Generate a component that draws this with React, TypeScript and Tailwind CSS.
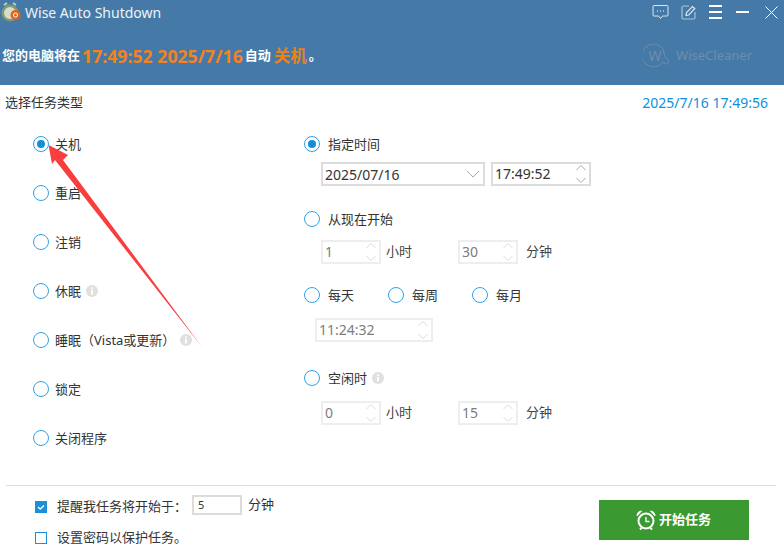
import React from "react";

const font = { fontFamily: '"Noto Sans", "Noto Sans CJK SC", sans-serif' };

function Radio({ checked = false, label, info = false, right = false, className = "" }: { checked?: boolean; label: string; info?: boolean; right?: boolean; className?: string }) {
  return (
    <div className={"flex items-center h-[24px] " + className}>
      <span className="w-[16px] h-[16px] rounded-full border-[1.5px] border-[#2ea3e8] flex items-center justify-center shrink-0">
        {checked && <span className="w-[8px] h-[8px] rounded-full bg-[#0f8fdc]" />}
      </span>
      <span className={"pt-[1px] text-[13px] text-[#333] whitespace-pre " + (right ? "ml-[8px]" : "ml-[6px]")}>{label}</span>
      {info && <Info />}
    </div>
  );
}

function Info() {
  return (
    <span className="ml-[5px] w-[12px] h-[12px] rounded-full bg-[#e0e0e0] flex items-center justify-center shrink-0">
      <svg width="12" height="12" viewBox="0 0 12 12">
        <rect x="5" y="2.5" width="2" height="1.5" fill="#fff" />
        <rect x="5" y="5" width="2" height="4.5" fill="#fff" />
      </svg>
    </span>
  );
}

function Chevrons({ color = "#b5b5b5" }: { color?: string }) {
  return (
    <svg width="12" height="22" viewBox="0 0 12 22" fill="none" stroke={color} strokeWidth="1" className="shrink-0">
      <polyline points="1.5,7 6,2.5 10.5,7" />
      <polyline points="1.5,15 6,19.5 10.5,15" />
    </svg>
  );
}

function Spin({ value, className, disabled = true }: { value: string; className: string; disabled?: boolean }) {
  return (
    <div className={"h-[24px] border-2 flex items-center justify-between pl-[2px] pr-[2px] text-[14px] leading-none " + (disabled ? "border-[#eeeeee] text-[#7d7d7d] " : "border-[#dcdcdc] text-[#333] ") + className}>
      <span>{value}</span>
      <Chevrons color={disabled ? "#dcdcdc" : "#a8a8a8"} />
    </div>
  );
}

function SpinPair({ a, b }: { a: string; b: string }) {
  return (
    <div className="flex items-center ml-[17px] h-[24px]">
      <Spin value={a} className="w-[60px]" />
      <span className="ml-[5px] w-[72px] text-[13px] text-[#444]">小时</span>
      <Spin value={b} className="w-[60px]" />
      <span className="ml-[8px] text-[13px] text-[#444]">分钟</span>
    </div>
  );
}

export default function App() {
  return (
    <div className="relative w-[784px] h-[552px] bg-white overflow-hidden flex flex-col" style={font}>
      <header className="h-[85px] bg-[#457aa8] flex flex-col shrink-0">
        <div className="h-[24px] flex items-center">
          <svg width="20" height="22" viewBox="0 0 20 22" className="ml-[1px] shrink-0">
            <circle cx="9" cy="12" r="8.5" fill="#7f9a6b" />
            <circle cx="9" cy="12" r="6" fill="#d7dcd2" />
            <path d="M3 4 L6 2 M15 4 L12 2" stroke="#c5d0bd" strokeWidth="2" />
            <circle cx="14.5" cy="14" r="5" fill="#e0641c" />
            <circle cx="14.5" cy="14" r="2" fill="none" stroke="#fff" strokeWidth="1" />
          </svg>
          <span className="ml-[4px] text-[14px] text-[#eef3f8]">Wise Auto Shutdown</span>
          <div className="ml-auto flex items-center h-full text-white">
            <svg width="17" height="16" viewBox="0 0 17 16" fill="none" stroke="#dbe6f0" strokeWidth="1" className="mr-[12px]">
              <path d="M2 1.5 H15 Q16 1.5 16 2.5 V11 Q16 12 15 12 H10.5 L8.5 14.5 L6.5 12 H2 Q1 12 1 11 V2.5 Q1 1.5 2 1.5 Z" />
              <path d="M5 7 H6 M8 7 H9 M11 7 H12" stroke="#fff" />
            </svg>
            <svg width="15" height="15" viewBox="0 0 15 15" fill="none" stroke="#a9c5dd" strokeWidth="1.2" className="mr-[13px]">
              <path d="M8 1 H2.5 Q1 1 1 2.5 V12.5 Q1 14 2.5 14 H12.5 Q14 14 14 12.5 V7" />
              <path d="M5 10.5 L5.5 7.5 L11.5 1.5 L13.8 3.5 L7.8 10 Z" stroke="#dbe6f0" />
            </svg>
            <svg width="13" height="14" viewBox="0 0 13 14" fill="#fff" className="mr-[14px]">
              <rect x="0" y="0" width="13" height="2" />
              <rect x="0" y="6" width="13" height="2" />
              <rect x="0" y="12" width="13" height="2" />
            </svg>
            <svg width="14" height="2" viewBox="0 0 14 2" fill="#fff" className="mr-[15px]">
              <rect width="13" height="2" />
            </svg>
            <svg width="13" height="13" viewBox="0 0 13 13" stroke="#fff" strokeWidth="1" className="mr-[6px]">
              <path d="M0.5 0.5 L12.5 12.5 M12.5 0.5 L0.5 12.5" />
            </svg>
          </div>
        </div>
        <div className="flex items-center h-[36px] mt-[14px] pl-[2px] text-white whitespace-pre">
          <span className="text-[13px] font-bold">您的电脑将在</span>
          <span className="ml-[2px] text-[17.7px] font-bold text-[#f58220]">17:49:52 2025/7/16</span>
          <span className="ml-[2px] text-[13px] font-bold">自动</span>
          <span className="ml-[3px] text-[16.5px] font-bold text-[#e8821e]">关机</span>
          <span className="ml-[2px] text-[13px] font-bold">。</span>
          <div className="ml-auto mr-[32px] flex items-center">
            <svg width="27" height="25" viewBox="0 0 27 25" fill="none" stroke="#6f8cab" strokeWidth="1">
              <path d="M20 18 A11.5 11.5 0 1 1 20 5 Q21 9 22 13 Q26.5 15 25.5 18.5 Q24 22 20 18" />
              <text x="5.5" y="17" fontSize="14" fill="#6f8cab" stroke="none" fontFamily="Noto Sans">W</text>
            </svg>
            <span className="ml-[6px] text-[13px] text-[#6f8cab]">WiseCleaner</span>
          </div>
        </div>
      </header>

      <div className="flex items-center justify-between h-[35px] pl-[5px] pr-[16px] shrink-0">
        <span className="text-[13px] text-[#333]">选择任务类型</span>
        <span className="text-[14px] text-[#0f8fdc]">2025/7/16 17:49:56</span>
      </div>

      <div className="flex h-[365px] shrink-0 pt-[12px]">
        <div className="ml-[33px] w-[270px] flex flex-col gap-[25px] shrink-0">
          <Radio checked label="关机" />
          <Radio label="重启" />
          <Radio label="注销" />
          <Radio label="休眠" info />
          <Radio label="睡眠（Vista或更新）" info />
          <Radio label="锁定" />
          <Radio label="关闭程序" />
        </div>
        <div className="flex flex-col pl-[1px]">
          <Radio checked right label="指定时间" />
          <div className="flex ml-[17px] mt-[6px] gap-[6px]">
            <div className="w-[164px] h-[24px] border-2 border-[#dcdcdc] flex items-center justify-between pl-[2px] pr-[2px] text-[14px] text-[#333]">
              <span>2025/07/16</span>
              <svg width="16" height="10" viewBox="0 0 16 10" fill="none" stroke="#a8a8a8" strokeWidth="1">
                <polyline points="2,2 8,8 14,2" />
              </svg>
            </div>
            <Spin value="17:49:52" className="w-[100px]" disabled={false} />
          </div>
          <Radio right label="从现在开始" className="mt-[21px]" />
          <div className="mt-[9px]">
            <SpinPair a="1" b="30" />
          </div>
          <div className="flex mt-[19px] w-[240px]">
            <Radio right label="每天" className="w-[84px]" />
            <Radio right label="每周" className="w-[84px]" />
            <Radio right label="每月" />
          </div>
          <Spin value="11:24:32" className="ml-[11px] mt-[11px] w-[118px]" />
          <Radio right label="空闲时" info className="mt-[24px]" />
          <div className="mt-[11px]">
            <SpinPair a="0" b="15" />
          </div>
        </div>
      </div>

      <div className="mx-[6px] h-[1px] bg-[#dddddd] w-[770px] shrink-0" />

      <div className="flex flex-1 pl-[35px] pr-[35px]">
        <div className="flex flex-col">
          <div className="flex items-center h-[22px] mt-[10px]">
            <span className="w-[12px] h-[12px] bg-[#1d8fd8] flex items-center justify-center">
              <svg width="12" height="12" viewBox="0 0 12 12" fill="none" stroke="#fff" strokeWidth="1.3">
                <polyline points="3,6 5.2,8 9,4.5" />
              </svg>
            </span>
            <span className="ml-[10px] w-[135px] text-[13px] text-[#333]">提醒我任务将开始于：</span>
            <span className="mb-[4px] w-[50px] h-[20px] border-2 border-[#dcdcdc] flex items-center pl-[4px] text-[11px] text-[#333]">5</span>
            <span className="mb-[4px] ml-[6px] text-[13px] text-[#333]">分钟</span>
          </div>
          <div className="flex items-center h-[22px] mt-[9px]">
            <span className="w-[12px] h-[12px] border-[1.5px] border-[#1d8fd8]" />
            <span className="ml-[10px] text-[13px] text-[#333]">设置密码以保护任务。</span>
          </div>
        </div>
        <div className="ml-auto mt-[14px] w-[150px] h-[40px] bg-[#3a9a31] flex items-center justify-center text-white text-[13px] font-bold">
          <svg width="22" height="22" viewBox="0 0 22 22" fill="none" stroke="#fff" strokeWidth="2" className="mr-[2px] -ml-[2px]">
            <circle cx="11" cy="12" r="7.5" />
            <path d="M11 8 V12.5 H14.5" strokeWidth="1.3" />
            <path d="M2 7 Q2 2.5 6.5 2 Z" fill="#fff" strokeWidth="1" />
            <path d="M20 7 Q20 2.5 15.5 2 Z" fill="#fff" strokeWidth="1" />
            <path d="M5 20.5 L6.5 19 M17 20.5 L15.5 19" />
          </svg>
          <span>开始任务</span>
        </div>
      </div>

      <svg className="absolute left-0 top-0 pointer-events-none" width="784" height="552" viewBox="0 0 784 552">
        <polygon points="48.5,145 68,155 63,160 202,347 55,160 52,164" fill="#fa3e3e" />
      </svg>
    </div>
  );
}
